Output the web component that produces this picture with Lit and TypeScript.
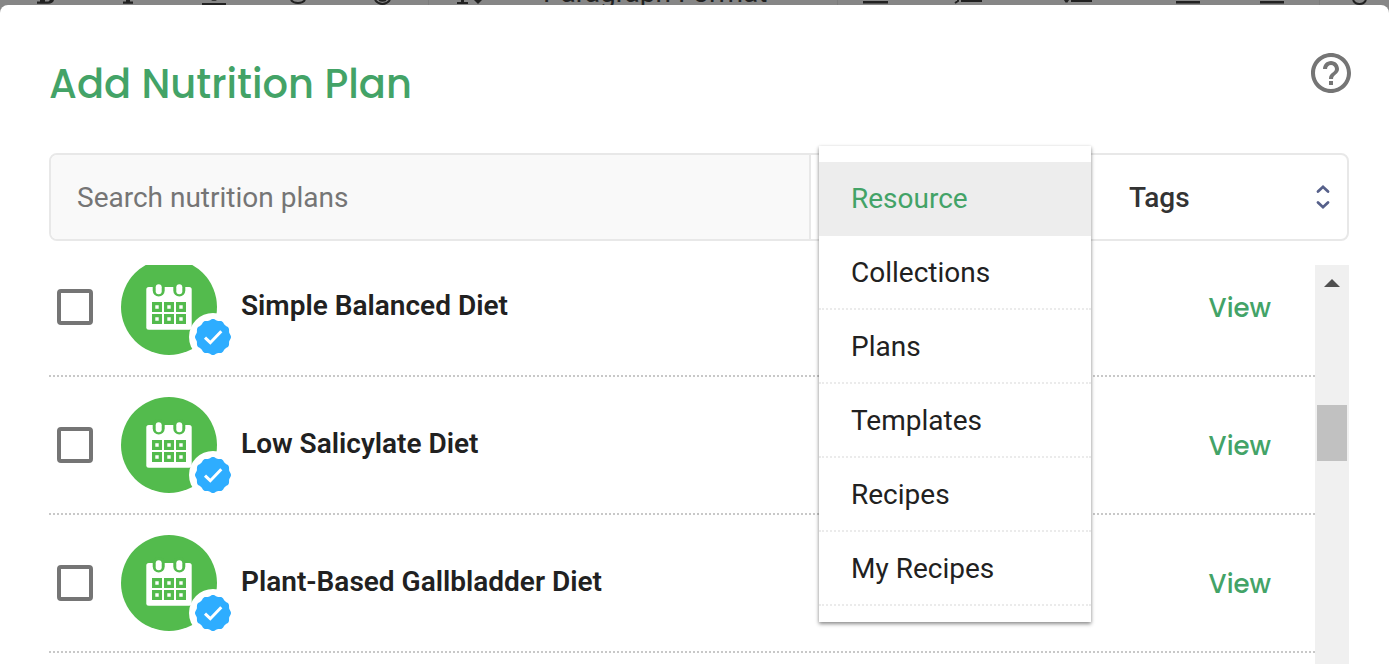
import { LitElement, html, css, svg } from "lit";
import { customElement, state } from "lit/decorators.js";
import { classMap } from "lit/directives/class-map.js";

const PLANS = ["Simple Balanced Diet", "Low Salicylate Diet", "Plant-Based Gallbladder Diet"];
const SOURCES = ["Resource", "Collections", "Plans", "Templates", "Recipes", "My Recipes"];

// Twelve-lobed outline of the verified seal.
const sealPath = (cx: number, cy: number): string => {
  const points: string[] = [];
  for (let i = 0; i < 144; i++) {
    const a = (i / 144) * Math.PI * 2;
    const r = 17.4 + 0.6 * Math.cos(12 * a);
    points.push(`${(cx + r * Math.cos(a)).toFixed(2)} ${(cy + r * Math.sin(a)).toFixed(2)}`);
  }
  return `M${points.join("L")}Z`;
};
const SEAL = sealPath(92, 78);

@customElement("editor-toolbar")
export class EditorToolbar extends LitElement {
  static styles = css`
    :host {
      display: block;
      height: 5px;
      overflow: hidden;
      color: #222;
    }
    .tools {
      display: flex;
      align-items: flex-end;
      height: 5px;
    }
    svg {
      display: block;
      flex: none;
    }
    .format {
      flex: none;
      width: 238px;
      font: 400 28px/28px Roboto, "Liberation Sans", sans-serif;
      white-space: nowrap;
      height: 26px;
    }
  `;

  render() {
    return html`
      <div class="tools">
        <svg width="543" height="5" viewBox="0 0 543 5" aria-hidden="true">
          <path d="M37 3.8V1.6h3V0h5v1.4h3.500L50 0h4q-1 3.800-6 3.800z M123 3.800V1.600h3V0h4v1.600h3v2.200z M202 3h24v2h-24z M211 0h6l-1.500 .7h-3z" fill="#222" />
          <path d="M291 0q2 3 7 3t7-3M375 0q3 4 7.500 4T390 0M379 0q3.500 1.500 7 0" fill="none" stroke="#222" stroke-width="2" />
          <path d="M428 0h1v5h-1z" fill="#7c7c7c" />
          <path d="M457 4V2h4V0h3v2h4v2z M474 0h8l-4 4z" fill="#222" />
        </svg>
        <span class="format">Paragraph Format</span>
        <svg width="608" height="5" viewBox="781 0 608 5" aria-hidden="true">
          <path d="M837 0h1v5h-1zM1319 0h1v5h-1z" fill="#7c7c7c" />
          <path d="M863 1h25v2.500h-25zM961 0h21v2h-21zM1071 0h21v2h-21zM1176 1h24v2.500h-24zM1260 1h24v2.500h-24zM1064 0h5l-1.500 2.500h-2z" fill="#222" />
          <path d="M958 0v1l-3 2M1353 0q2 4 6.500 4T1366 0" fill="none" stroke="#222" stroke-width="2" />
        </svg>
      </div>
    `;
  }
}

@customElement("plan-row")
export class PlanRow extends LitElement {
  static properties = { name: { type: String } };
  declare name: string;

  static styles = css`
    :host {
      display: flex;
      align-items: center;
      box-sizing: border-box;
      height: 138px;
      padding: 0 44px 0 8px;
      border-bottom: 2px dotted #c8c8c8;
    }
    .pick {
      display: flex;
      flex: 1;
      align-items: center;
      min-width: 0;
    }
    .box {
      appearance: none;
      flex: none;
      box-sizing: border-box;
      width: 36px;
      height: 36px;
      margin: 0 28px 0 0;
      border: 4px solid #757575;
      border-radius: 4px;
      background: #fff;
    }
    .box:checked {
      background: #43a367;
      border-color: #43a367;
    }
    .avatar {
      display: block;
      flex: none;
      margin-right: 24px;
      overflow: visible;
    }
    .name {
      padding-bottom: 2px;
      font: 600 28px/32px Roboto, "Liberation Sans", sans-serif;
      color: #212121;
    }
    .view {
      padding-top: 2px;
      font: 500 26px/32px Poppins, Inter, sans-serif;
      color: #43a367;
      text-decoration: none;
    }
  `;

  render() {
    return html`
      <label class="pick">
        <input class="box" type="checkbox" />
        <svg class="avatar" width="96" height="96" viewBox="0 0 96 96" aria-hidden="true">
          <circle cx="48" cy="48" r="48" fill="#53bb4d" />
          <rect x="25.300" y="28" width="45.400" height="42.700" rx="2.500" fill="#fff" />
          ${[37.7, 58.3].map(
            (x) => svg`
              <rect x=${x - 6} y="22" width="12" height="15.600" rx="6" fill="#53bb4d" />
              <rect x=${x - 3} y="25.300" width="6" height="10" rx="3" fill="#fff" />`
          )}
          ${[31, 43, 55].map((x) =>
            [43, 55].map(
              (y) => svg`<path fill="#53bb4d" fill-rule="evenodd" d=${`M${x} ${y}h10v10h-10zM${x + 3.3} ${y + 3.3}v3.4h3.4v-3.4z`} />`
            )
          )}
          <circle cx="92" cy="78" r="24" fill="#fff" />
          <path d=${SEAL} fill="#2eadff" />
          <path d="M84 78.700l5.300 5 11-11.400" fill="none" stroke="#fff" stroke-width="3" />
        </svg>
        <span class="name">${this.name}</span>
      </label>
      <a class="view" href="#view" aria-label="View ${this.name}">View</a>
    `;
  }
}

@customElement("app-root")
export class AppRoot extends LitElement {
  @state() private source = "Resource";

  static styles = css`
    :host {
      display: flex;
      flex-direction: column;
      height: 100vh;
      overflow: hidden;
      background: #868686;
      font: 400 28px/32px Roboto, "Liberation Sans", sans-serif;
      color: #212121;
    }
    editor-toolbar {
      flex: none;
    }
    .dialog {
      display: flex;
      flex: 1;
      flex-direction: column;
      min-height: 0;
      padding: 0 40px 0 49px;
      border-radius: 8px 8px 0 0;
      background: #fff;
    }
    .head {
      display: flex;
      flex: none;
      justify-content: space-between;
      align-items: flex-start;
      padding-top: 44px;
      margin-right: -6px;
      height: 104px;
    }
    .title {
      margin: 11px 0 0;
      font: 500 40px/48px Poppins, Inter, sans-serif;
      color: #43a367;
    }
    .help {
      padding: 0;
      border: 0;
      background: none;
      line-height: 0;
    }
    .filters {
      display: flex;
      flex: none;
      box-sizing: border-box;
      height: 88px;
      border: 2px solid #e8e8e8;
      border-radius: 8px;
    }
    .search {
      flex: 1;
      min-width: 0;
      box-sizing: border-box;
      padding: 2px 26px 0;
      border: 0;
      border-right: 2px solid #e8e8e8;
      border-radius: 6px 0 0 6px;
      background: #f9f9f9;
      font: inherit;
      color: inherit;
    }
    .search::placeholder {
      color: #757575;
      opacity: 1;
    }
    .source {
      position: relative;
      flex: none;
      width: 290px;
    }
    .opener {
      display: flex;
      align-items: center;
      justify-content: flex-end;
      width: 100%;
      height: 100%;
      padding: 0 16px;
      border: 0;
      background: none;
    }
    .menu {
      position: absolute;
      z-index: 1;
      top: -9px;
      left: 8px;
      width: 272px;
      padding: 16px 0;
      background: #fff;
      box-shadow: 0 2px 4px rgba(0, 0, 0, 0.4), 0 1px 3px rgba(0, 0, 0, 0.12);
    }
    .option {
      display: block;
      box-sizing: border-box;
      width: 100%;
      height: 74px;
      padding: 2px 32px 0;
      border: 0;
      border-bottom: 2px dotted #ebebeb;
      background: none;
      font: inherit;
      color: inherit;
      text-align: left;
    }
    .option.chosen {
      border-bottom-color: #ededed;
      background: #ededed;
      color: #43a367;
    }
    .tags {
      display: grid;
      flex: none;
      align-items: center;
      width: 246px;
    }
    .tags > * {
      grid-area: 1 / 1;
    }
    .select {
      appearance: none;
      width: 100%;
      height: 100%;
      padding: 2px 50px 0 28px;
      border: 0;
      background: none;
      font: inherit;
      font-weight: 500;
      color: #333;
    }
    .chevrons {
      justify-self: end;
      margin-right: 15px;
      pointer-events: none;
    }
    .results {
      display: flex;
      flex: 1;
      min-height: 0;
      margin-top: 24px;
    }
    .list {
      flex: 1;
      min-width: 0;
      overflow: hidden;
    }
    .rows {
      margin-top: -26px;
    }
    .bar {
      display: flex;
      flex: none;
      flex-direction: column;
      align-items: center;
      width: 34px;
      background: #f0f0f0;
    }
    .up {
      margin: 14px 0 118px;
    }
    .thumb {
      width: 30px;
      height: 56px;
      background: #c1c1c1;
    }
  `;

  private chevrons() {
    return html`<svg class="chevrons" width="18" height="26" viewBox="0 0 18 26" aria-hidden="true">
      <path d="M4 7.500l5-4.700 5 4.700M4 18.500l5 4.700 5-4.700" fill="none" stroke="#56608a" stroke-width="2.800" stroke-linecap="round" />
    </svg>`;
  }

  render() {
    return html`
      <editor-toolbar></editor-toolbar>
      <section class="dialog" role="dialog" aria-labelledby="title">
        <header class="head">
          <h1 class="title" id="title">Add Nutrition Plan</h1>
          <button class="help" aria-label="Help">
            <svg width="48" height="48" viewBox="0 0 24 24" fill="#757575" aria-hidden="true">
              <path d="M11 18h2v-2h-2v2zm1-16C6.480 2 2 6.480 2 12s4.480 10 10 10 10-4.480 10-10S17.520 2 12 2zm0 18c-4.410 0-8-3.590-8-8s3.590-8 8-8 8 3.590 8 8-3.590 8-8 8zm0-14c-2.210 0-4 1.790-4 4h2c0-1.100.9-2 2-2s2 .9 2 2c0 2-3 1.750-3 5h2c0-2.250 3-2.500 3-5 0-2.210-1.790-4-4-4z" />
            </svg>
          </button>
        </header>
        <div class="filters">
          <input class="search" type="search" aria-label="Search nutrition plans" placeholder="Search nutrition plans" />
          <div class="source">
            <button class="opener" aria-label="Resource" aria-haspopup="listbox" aria-expanded="true">${this.chevrons()}</button>
            <div class="menu" role="listbox" aria-label="Resource type">
              ${SOURCES.map(
                (s) => html`<button
                  class=${classMap({ option: true, chosen: s === this.source })}
                  role="option"
                  aria-selected=${s === this.source ? "true" : "false"}
                  @click=${() => (this.source = s)}
                >${s}</button>`
              )}
            </div>
          </div>
          <div class="tags">
            <select class="select" aria-label="Tags">
              <option>Tags</option>
            </select>
            ${this.chevrons()}
          </div>
        </div>
        <div class="results">
          <div class="list">
            <div class="rows">${PLANS.map((p) => html`<plan-row .name=${p}></plan-row>`)}</div>
          </div>
          <div class="bar" aria-hidden="true">
            <svg class="up" width="16" height="8" viewBox="0 0 16 8"><path d="M8 0l8 8H0z" fill="#505050" /></svg>
            <div class="thumb"></div>
          </div>
        </div>
      </section>
    `;
  }
}
